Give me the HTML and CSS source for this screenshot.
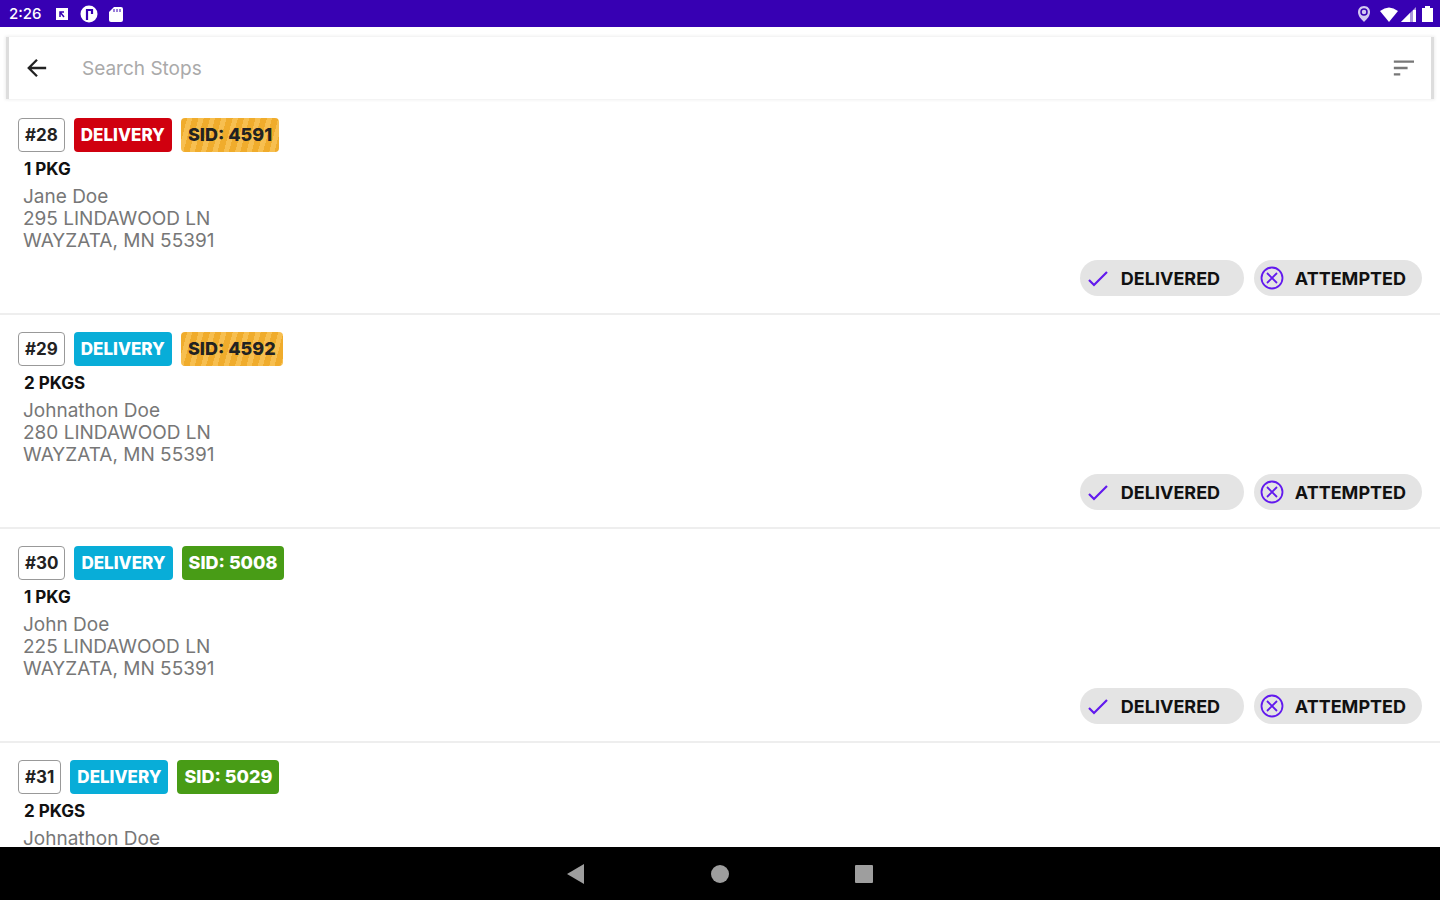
FILE: index.html
```html
<!doctype html>
<html lang="en">
<head>
<meta charset="UTF-8">
<meta name="viewport" content="width=device-width, initial-scale=1">
<title>Stops</title>
<link rel="stylesheet" href="styles.css">
</head>
<body>
<svg class="symbols" aria-hidden="true">
<symbol id="check" viewBox="0 0 24 24"><path d="M3 14l5 5L21 6" fill="none" stroke="currentColor" stroke-width="2.2"/></symbol>
<symbol id="cross" viewBox="0 0 24 24"><circle cx="12" cy="12" r="10.5" fill="none" stroke="currentColor" stroke-width="1.8"/><path d="M7 7l10 10M17 7L7 17" fill="none" stroke="currentColor" stroke-width="1.8"/></symbol>
</svg>

<div class="status-bar">
<span class="clock">2:26</span>
<svg class="status-icon" viewBox="0 0 18 18"><path d="M3 3h12v12H3z" fill="#fff"/><path d="M7 12V7h4M7 7l4 5" fill="none" stroke="#3700b3" stroke-width="1.5"/></svg>
<svg class="status-icon" viewBox="0 0 18 18"><circle cx="9" cy="9" r="8.5" fill="#fff"/><path d="M7 4v11M7 5h5v4" fill="none" stroke="#3700b3" stroke-width="2.2"/></svg>
<svg class="status-icon" viewBox="0 0 18 18"><path d="M7 2h7q2 0 2 2v11q0 2-2 2H4q-2 0-2-2V7z" fill="#fff"/><path d="M7 4v3M10 4v3M13 4v3" stroke="#3700b3" stroke-width="1"/></svg>
<div class="status-right">
<svg class="status-icon location" viewBox="0 0 18 18"><path d="M9 1c4 0 6 3 6 6 0 4-3 7-6 10C6 14 3 11 3 7c0-3 2-6 6-6z" fill="#d3c8f0"/><circle cx="9" cy="7" r="3" fill="none" stroke="#3700b3" stroke-width="1.5"/></svg>
<svg class="status-icon" viewBox="0 0 18 18"><path d="M9 17L0 6q9-7 18 0z" fill="#fff"/></svg>
<svg class="status-icon" viewBox="0 0 18 18"><path d="M17 2v15H2z" fill="#a996dc"/><path d="M11 8v9H2zM14 5h3v12h-3z" fill="#fff"/></svg>
<svg class="status-icon" viewBox="0 0 18 18"><path d="M7 1h5v2h3v14H4V3h3z" fill="#fff"/></svg>
</div>
</div>

<form class="search">
<button class="icon-button" type="button" aria-label="Back"><svg viewBox="0 0 24 24"><path d="M22 12H4M12 3l-9 9 9 9" fill="none" stroke="#222" stroke-width="2.5"/></svg></button>
<input type="text" placeholder="Search Stops" aria-label="Search Stops">
<button class="icon-button sort" type="button" aria-label="Sort"><svg viewBox="0 0 24 24"><path d="M2 5h22M2 12h15M2 19h7" stroke="#777" stroke-width="2.5"/></svg></button>
</form>

<main class="stops">
<article class="stop">
<div class="tags"><span class="tag number">#28</span><span class="tag red">DELIVERY</span><span class="tag sid amber">SID: 4591</span></div>
<div class="packages">1 PKG</div>
<address>Jane Doe<br>295 LINDAWOOD LN<br>WAYZATA, MN 55391</address>
<div class="actions">
<button class="chip" type="button"><svg><use href="#check"/></svg>DELIVERED</button>
<button class="chip" type="button"><svg><use href="#cross"/></svg>ATTEMPTED</button>
</div>
</article>

<article class="stop">
<div class="tags"><span class="tag number">#29</span><span class="tag blue">DELIVERY</span><span class="tag sid amber">SID: 4592</span></div>
<div class="packages">2 PKGS</div>
<address>Johnathon Doe<br>280 LINDAWOOD LN<br>WAYZATA, MN 55391</address>
<div class="actions">
<button class="chip" type="button"><svg><use href="#check"/></svg>DELIVERED</button>
<button class="chip" type="button"><svg><use href="#cross"/></svg>ATTEMPTED</button>
</div>
</article>

<article class="stop">
<div class="tags"><span class="tag number">#30</span><span class="tag blue">DELIVERY</span><span class="tag sid green">SID: 5008</span></div>
<div class="packages">1 PKG</div>
<address>John Doe<br>225 LINDAWOOD LN<br>WAYZATA, MN 55391</address>
<div class="actions">
<button class="chip" type="button"><svg><use href="#check"/></svg>DELIVERED</button>
<button class="chip" type="button"><svg><use href="#cross"/></svg>ATTEMPTED</button>
</div>
</article>

<article class="stop">
<div class="tags"><span class="tag number">#31</span><span class="tag blue">DELIVERY</span><span class="tag sid green">SID: 5029</span></div>
<div class="packages">2 PKGS</div>
<address>Johnathon Doe</address>
</article>
</main>

<nav class="nav-bar">
<button type="button" aria-label="Back"><svg viewBox="0 0 20 20"><path d="M1 10L18 0v20z"/></svg></button>
<button type="button" aria-label="Home"><svg viewBox="0 0 20 20"><circle cx="10" cy="10" r="9"/></svg></button>
<button type="button" aria-label="Recent apps"><svg viewBox="0 0 20 20"><rect x="1" y="1" width="18" height="18" rx="1"/></svg></button>
</nav>
</body>
</html>
```
FILE: styles.css
```css
* {
	box-sizing: border-box;
}

body {
	display: flex;
	flex-direction: column;
	height: 100vh;
	margin: 0;
	background: #fff;
	color: #111;
	font-family: Inter, sans-serif;
	font-size: 19px;
}

button {
	padding: 0;
	border: 0;
	background: none;
	color: inherit;
	font: inherit;
}

.symbols {
	display: none;
}

/* status bar */
.status-bar {
	display: flex;
	align-items: center;
	flex: none;
	gap: 9px;
	height: 27px;
	padding: 0 4px 0 9px;
	background: #3700b3;
	color: #fff;
}

.clock {
	margin-right: 3px;
	font-size: 15px;
	font-weight: 500;
}

.status-icon {
	width: 18px;
	height: 18px;
}

.status-right {
	display: flex;
	align-items: center;
	gap: 1px;
	margin-left: auto;
}

.location {
	margin-right: 6px;
}

/* search */
.search {
	display: flex;
	align-items: center;
	flex: none;
	height: 62px;
	margin: 38px 6px 0;
	margin-top: 10px;
	padding: 0 17px;
	border: solid #ddd;
	border-width: 0 3px;
	box-shadow: 0 0 3px 1px #eee;
}

.icon-button {
	width: 22px;
	height: 22px;
}

.icon-button svg {
	display: block;
	width: 100%;
	height: 100%;
}

.search input {
	flex: 1;
	min-width: 0;
	margin: 0 32px 0 34px;
	padding: 0;
	border: 0;
	outline: 0;
	background: none;
	font: inherit;
}

.search input::placeholder {
	color: #aaa;
}

/* stop list */
.stops {
	flex: 1;
	min-height: 0;
	overflow: hidden;
}

.stop {
	padding: 17px 18px;
	border-bottom: 2px solid #eee;
}

.stop:first-child {
	padding-top: 19px;
}

.tags {
	display: flex;
	gap: 9px;
}

.tag {
	padding: 0 7px;
	border-radius: 4px;
	color: #fff;
	font-size: 17px;
	font-weight: 800;
	line-height: 34px;
}

.number {
	border: 1px solid #999;
	padding: 0 6px;
	color: #222;
	font-weight: 700;
	line-height: 32px;
}

.sid {
	font-size: 18px;
}

.red {
	background: #d0000f;
}

.blue {
	background: #08add8;
}

.green {
	background: #489c16;
}

.amber {
	background: repeating-linear-gradient(105deg, #f0ac2c 0 6px, #f7bf50 6px 11px);
	color: #222;
}

.packages {
	margin: 6px 6px;
	font-size: 17px;
	font-weight: 700;
	line-height: 22px;
}

address {
	margin: 0 5px;
	color: #777;
	font-style: normal;
	line-height: 22px;
}

.actions {
	display: flex;
	justify-content: flex-end;
	gap: 10px;
	margin-top: 8px;
}

.chip {
	display: flex;
	align-items: center;
	gap: 11px;
	min-width: 164px;
	height: 36px;
	padding: 0 16px 0 6px;
	border-radius: 18px;
	background: #e4e4e4;
	font-size: 18px;
	font-weight: 700;
}

.chip svg {
	width: 24px;
	height: 24px;
	color: #6219ee;
}

/* navigation bar */
.nav-bar {
	display: flex;
	justify-content: center;
	align-items: center;
	flex: none;
	gap: 124px;
	height: 53px;
	background: #000;
}

.nav-bar svg {
	display: block;
	width: 20px;
	height: 20px;
	fill: #9e9e9e;
}
```
